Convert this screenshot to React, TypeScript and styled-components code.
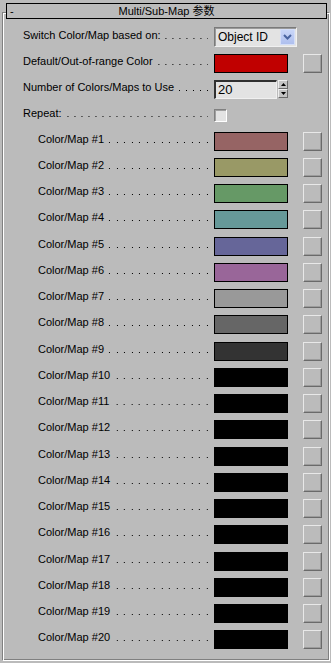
import React from 'react';
import styled, { createGlobalStyle } from 'styled-components';

const GlobalStyle = createGlobalStyle`
  html, body {
    margin: 0;
    padding: 0;
    background: #bbbbbb;
  }
  body {
    font-family: 'Liberation Sans', Arial, 'Noto Sans CJK SC', sans-serif;
    font-size: 11px;
    color: #000;
  }
`;

const Page = styled.div`
  width: 331px;
  height: 663px;
  padding-top: 3px;
  box-sizing: border-box;
  background: #bbbbbb;
  overflow: hidden;
`;

const Header = styled.div`
  position: relative;
  z-index: 1;
  display: flex;
  align-items: center;
  height: 16px;
  margin: 0 4px 0 6px;
  border: 1px solid #000;
  box-sizing: border-box;
  background: #bbbbbb;
  line-height: 14px;
`;

const Minus = styled.span`
  width: 16px;
  padding-left: 3px;
  box-sizing: border-box;
`;

const Title = styled.span`
  flex: 1;
  text-align: center;
  font-family: 'Liberation Sans', Arial, 'Noto Sans CJK SC', sans-serif;
`;

const Panel = styled.div`
  margin: -7px 0 0 2px;
  width: 328px;
  height: 649px;
  box-sizing: border-box;
  border: 1px solid;
  border-color: #808080 #ffffff #ffffff #808080;
  box-shadow: inset 1px 1px 0 #ffffff, inset -1px -1px 0 #808080;
  padding: 11px 7px 0 0;
`;

const Row = styled.div<{ $indent?: boolean; $h: number }>`
  display: grid;
  grid-template-columns: 1fr 89px 19px;
  align-items: center;
  height: ${(p) => p.$h}px;
  padding-left: ${(p) => (p.$indent ? 35 : 20)}px;
`;

const Label = styled.div`
  display: flex;
  height: 13px;
  line-height: 13px;
  margin: 0 6px 4px 0;
  white-space: nowrap;
`;

const Leader = styled.span<{ $wide?: boolean }>`
  flex: 1;
  margin-left: 3px;
  background-image: ${(p) =>
    p.$wide
      ? 'linear-gradient(to right, transparent 6px, #000 6px, #000 7px, transparent 7px, transparent 14px, #000 14px)'
      : 'linear-gradient(to right, transparent 6px, #000 6px)'};
  background-size: ${(p) => (p.$wide ? '15px 1px' : '7px 1px')};
  background-repeat: repeat-x;
  background-position: right 0 bottom 3px;
`;

const Select = styled.div`
  position: relative;
  width: 83px;
  height: 20px;
  box-sizing: border-box;
  border: 1px solid;
  border-color: #7a7a7a #f0f0f0 #f0f0f0 #7a7a7a;
  box-shadow: inset 1px 1px 0 #9a9a9a;
  background: #e3e3e3;
  display: flex;
  align-items: center;
  padding-left: 3px;
  font-size: 12px;
`;

const SelectText = styled.span`
  flex: 1;
`;

const SelectArrow = styled.span`
  width: 15px;
  height: 16px;
  margin-right: 1px;
  box-sizing: border-box;
  border: 1px solid #d4def8;
  background: linear-gradient(#c9d6f8, #aebfee);
  display: flex;
  align-items: center;
  justify-content: center;
`;

const Swatch = styled.div<{ $color: string }>`
  width: 74px;
  height: 19px;
  box-sizing: border-box;
  border: 1px solid #000;
  background: ${(p) => p.$color};
`;

const MapButton = styled.div`
  width: 19px;
  height: 19px;
  box-sizing: border-box;
  border: 1px solid;
  border-color: #e8e8e8 #6a6a6a #6a6a6a #e8e8e8;
  box-shadow: inset -1px -1px 0 #9c9c9c;
  background: #bbbbbb;
`;

const Spinner = styled.div`
  display: flex;
  align-items: flex-start;
  height: 19px;
`;

const SpinInput = styled.div`
  width: 63px;
  height: 19px;
  box-sizing: border-box;
  border-style: solid;
  border-width: 2px 1px 1px 2px;
  border-color: #303030 #f0f0f0 #f0f0f0 #303030;
  background: #e3e3e3;
  padding-left: 2px;
  font-size: 13px;
  line-height: 15px;
`;

const SpinButtons = styled.div`
  display: flex;
  flex-direction: column;
  margin-left: 1px;
`;

const SpinBtn = styled.div`
  width: 10px;
  height: 9px;
  box-sizing: border-box;
  border: 1px solid;
  border-color: #eeeeee #6a6a6a #6a6a6a #eeeeee;
  background: #c4c4c4;
  display: flex;
  align-items: center;
  justify-content: center;
`;

const Check = styled.div`
  width: 13px;
  height: 13px;
  box-sizing: border-box;
  border: 1px solid;
  border-color: #808080 #ffffff #ffffff #808080;
  box-shadow: inset 1px 1px 0 #a0a0a0;
  background: #e3e3e3;
`;

const mapColors = [
  '#966464',
  '#999966',
  '#669966',
  '#669999',
  '#666699',
  '#996699',
  '#999999',
  '#666666',
  '#333333',
  ...Array(11).fill('#000000'),
];

function Chevron() {
  return (
    <svg width="9" height="6" viewBox="0 0 9 6">
      <path d="M1 1 L4.5 4.5 L8 1" fill="none" stroke="#4a64a0" strokeWidth="2" />
    </svg>
  );
}

function Tri({ up }: { up?: boolean }) {
  return (
    <svg width="5" height="3" viewBox="0 0 5 3">
      <path d={up ? 'M0 3 L2.5 0 L5 3 Z' : 'M0 0 L2.5 3 L5 0 Z'} fill="#000" />
    </svg>
  );
}

export default function App() {
  return (
    <Page>
      <GlobalStyle />
      <Header>
        <Minus>-</Minus>
        <Title>Multi/Sub-Map 参数</Title>
        <Minus />
      </Header>
      <Panel>
        <Row $h={26}>
          <Label>
            Switch Color/Map based on:
            <Leader />
          </Label>
          <Select>
            <SelectText>Object ID</SelectText>
            <SelectArrow>
              <Chevron />
            </SelectArrow>
          </Select>
        </Row>
        <Row $h={26}>
          <Label>
            Default/Out-of-range Color
            <Leader />
          </Label>
          <Swatch $color="#c00000" />
          <MapButton />
        </Row>
        <Row $h={26}>
          <Label>
            Number of Colors/Maps to Use
            <Leader />
          </Label>
          <Spinner>
            <SpinInput>20</SpinInput>
            <SpinButtons>
              <SpinBtn>
                <Tri up />
              </SpinBtn>
              <SpinBtn>
                <Tri />
              </SpinBtn>
            </SpinButtons>
          </Spinner>
        </Row>
        <Row $h={26}>
          <Label>
            Repeat:
            <Leader />
          </Label>
          <Check />
        </Row>
        {mapColors.map((c, i) => (
          <Row key={i} $h={26.26} $indent>
            <Label>
              Color/Map #{i + 1}
              <Leader $wide />
            </Label>
            <Swatch $color={c} />
            <MapButton />
          </Row>
        ))}
      </Panel>
    </Page>
  );
}
